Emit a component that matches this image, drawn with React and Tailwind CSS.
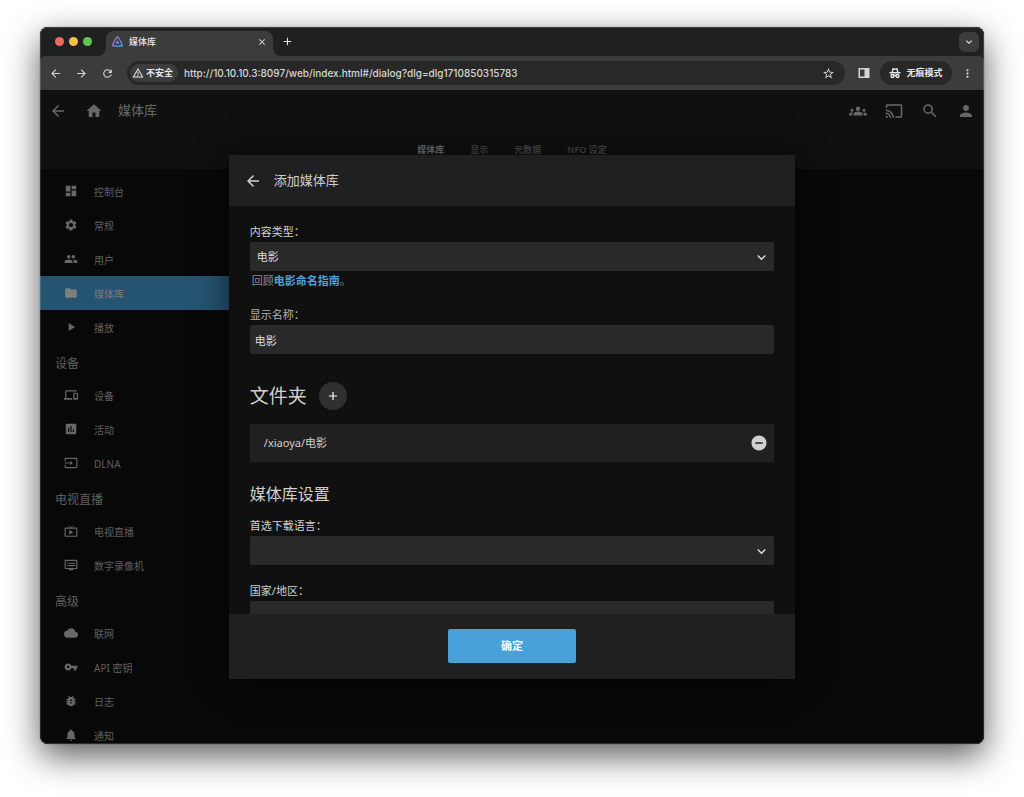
import React from 'react'
import {
  MdAdd,
  MdArrowBack,
  MdArrowForward,
  MdAssessment,
  MdBugReport,
  MdCast,
  MdClose,
  MdCloud,
  MdDashboard,
  MdDevices,
  MdDvr,
  MdFolder,
  MdGroups,
  MdHome,
  MdInput,
  MdKeyboardArrowDown,
  MdLiveTv,
  MdMoreVert,
  MdNotifications,
  MdPeople,
  MdPerson,
  MdPlayArrow,
  MdRefresh,
  MdRemoveCircle,
  MdSearch,
  MdSettings,
  MdStarBorder,
  MdVpnKey,
  MdWarningAmber,
} from 'react-icons/md'

const menu = [
  {
    items: [
      { label: '控制台', icon: MdDashboard },
      { label: '常规', icon: MdSettings },
      { label: '用户', icon: MdPeople },
      { label: '媒体库', icon: MdFolder, active: true },
      { label: '播放', icon: MdPlayArrow },
    ],
  },
  {
    title: '设备',
    items: [
      { label: '设备', icon: MdDevices },
      { label: '活动', icon: MdAssessment },
      { label: 'DLNA', icon: MdInput },
    ],
  },
  {
    title: '电视直播',
    items: [
      { label: '电视直播', icon: MdLiveTv },
      { label: '数字录像机', icon: MdDvr },
    ],
  },
  {
    title: '高级',
    items: [
      { label: '联网', icon: MdCloud },
      { label: 'API 密钥', icon: MdVpnKey },
      { label: '日志', icon: MdBugReport },
      { label: '通知', icon: MdNotifications },
    ],
  },
]

const actions = [
  { label: '同步播放', icon: MdGroups },
  { label: '投屏', icon: MdCast },
  { label: '搜索', icon: MdSearch },
  { label: '用户', icon: MdPerson },
]

function JellyfinLogo() {
  return (
    <svg viewBox="0 0 24 24" className="size-[11px] shrink-0">
      <defs>
        <linearGradient id="jf" x1="0.1" y1="0.4" x2="0.9" y2="0.9">
          <stop offset="0" stopColor="#a55fc4" />
          <stop offset="1" stopColor="#2ba0dc" />
        </linearGradient>
      </defs>
      <path
        fill="url(#jf)"
        d="M12 0C8.826 0-1.398 18.537.16 21.666c1.56 3.129 22.14 3.094 23.682 0C25.384 18.573 15.177 0 12 0zm7.76 18.949c-1.008 2.028-14.493 2.05-15.514 0C3.224 16.9 9.92 4.755 12.003 4.755c2.081 0 8.77 12.166 7.759 14.196zM12 9.198c-1.054 0-4.446 6.15-3.93 7.189.518 1.04 7.348 1.027 7.86 0 .511-1.027-2.874-7.19-3.93-7.19z"
      />
    </svg>
  )
}

function IncognitoIcon() {
  return (
    <svg
      viewBox="0 0 24 24"
      className="size-3 shrink-0"
      fill="none"
      stroke="currentColor"
      strokeWidth="2.8"
    >
      <path d="M6.500 10l1.500-6.500c2.500 1 5.500 1 8 0L17.500 10M1 11.500h22" strokeLinejoin="round" />
      <circle cx="7" cy="18" r="3" />
      <circle cx="17" cy="18" r="3" />
      <path d="M9.500 17.500c1.500-1.200 3.500-1.200 5 0" />
    </svg>
  )
}

function SidePanelIcon() {
  return (
    <svg viewBox="0 0 12 12" className="size-3">
      <path fill="currentColor" fillRule="evenodd" d="M.5 1h11v10H.5zM2 2.500v7h4.500v-7z" />
    </svg>
  )
}

// inverted corner where the tab meets the toolbar
function TabFoot({ flip }) {
  return (
    <svg viewBox="0 0 8 8" className={flip ? 'size-2 -scale-x-100' : 'size-2'}>
      <path fill="#3c3c3c" d="M8 0v8H0a8 8 0 0 0 8-8z" />
    </svg>
  )
}

function TabStrip() {
  return (
    <div className="flex h-[29px] items-end bg-[#1f2121] pl-[15px] pr-[5px] text-[#e6e6e6]">
      <div className="flex h-full items-center gap-[5px]">
        <span className="size-[9px] rounded-full bg-[#ec6a5e]" />
        <span className="size-[9px] rounded-full bg-[#f4bf4f]" />
        <span className="size-[9px] rounded-full bg-[#61c554]" />
      </div>
      <div className="ml-[6px] flex items-end">
        <TabFoot />
        <div className="flex h-[25px] w-[167px] items-center rounded-t-lg bg-[#3c3c3c] pl-[6px] pr-[6px] pb-1">
          <JellyfinLogo />
          <span className="ml-[6px] flex-1 text-[9px] font-medium">媒体库</span>
          <button type="button" aria-label="关闭标签页">
            <MdClose size={10} />
          </button>
        </div>
        <TabFoot flip />
      </div>
      <button type="button" aria-label="新标签页" className="flex h-full items-center">
        <MdAdd size={13} />
      </button>
      <button
        type="button"
        aria-label="搜索标签页"
        className="mb-1 ml-auto flex size-5 items-center justify-center rounded-md bg-[#3c3c3c]"
      >
        <MdKeyboardArrowDown size={12} />
      </button>
    </div>
  )
}

function Toolbar() {
  return (
    <div className="bg-[#1f2121]">
      <div className="flex h-[34px] items-center rounded-t-md bg-[#3c3c3c] text-[#d6d6d6]">
        <div className="flex shrink-0 items-center gap-[13px] pl-[9px]">
          <button type="button" aria-label="后退">
            <MdArrowBack size={13} />
          </button>
          <button type="button" aria-label="前进">
            <MdArrowForward size={13} />
          </button>
          <button type="button" aria-label="重新加载">
            <MdRefresh size={13} />
          </button>
        </div>
        <div className="ml-[13px] flex h-6 min-w-0 flex-1 items-center rounded-full bg-[#282828] pl-[3px] pr-[10px]">
          <span className="flex h-[18px] shrink-0 items-center gap-[2px] rounded-full bg-[#3c3c3c] pl-[2px] pr-[5px] text-[9px] font-semibold text-[#e6e6e6]">
            <MdWarningAmber size={12} />
            不安全
          </span>
          <input
            type="text"
            aria-label="地址"
            defaultValue="http://10.10.10.3:8097/web/index.html#/dialog?dlg=dlg1710850315783"
            className="ml-[6px] min-w-0 flex-1 bg-transparent text-[10px] font-medium outline-none"
          />
          <button type="button" aria-label="收藏">
            <MdStarBorder size={13} />
          </button>
        </div>
        <button type="button" aria-label="侧边栏" className="ml-[13px]">
          <SidePanelIcon />
        </button>
        <button
          type="button"
          className="ml-[10px] flex h-6 w-[72px] shrink-0 items-center justify-center gap-[5px] rounded-full bg-[#282828] text-[9px] font-semibold text-[#e6e6e6]"
        >
          <IncognitoIcon />
          无痕模式
        </button>
        <button type="button" aria-label="菜单" className="ml-[9px] mr-[10px]">
          <MdMoreVert size={13} />
        </button>
      </div>
    </div>
  )
}

function Header() {
  return (
    <header className="h-[79px] bg-[#202020] text-[#cfcfcf]">
      <div className="flex h-[41px] items-center pl-[9px]">
        <a href="#back" aria-label="返回" className="flex w-9">
          <MdArrowBack size={18} />
        </a>
        <a href="#home" aria-label="主页">
          <MdHome size={18} />
        </a>
        <h1 className="ml-[15px] text-[13px]">媒体库</h1>
        <div className="ml-auto flex">
          {actions.map(({ label, icon: Icon }) => (
            <button key={label} type="button" aria-label={label} className="flex w-9 justify-center">
              <Icon size={18} />
            </button>
          ))}
        </div>
      </div>
      <nav className="flex h-[38px] items-center justify-center gap-[26px] text-[9px] font-semibold text-[#929292]">
        <a href="#library" className="text-[#e0e0e0]">
          媒体库
        </a>
        <a href="#display">显示</a>
        <a href="#metadata">元数据</a>
        <a href="#nfo">NFO 设定</a>
      </nav>
    </header>
  )
}

function Sidebar() {
  return (
    <aside className="w-1/5 min-h-0 flex-1 overflow-hidden pt-[5px]">
      {menu.map((group, i) => (
        <div key={i}>
          {group.title && (
            <h2 className="flex h-[34px] items-center pl-[15px] pt-[6px] text-[12px] text-[#bcbcbc]">
              {group.title}
            </h2>
          )}
          {group.items.map(({ label, icon: Icon, active }) => (
            <a
              key={label}
              href={'#' + label}
              className={
                active
                  ? 'flex h-[34px] items-center gap-4 bg-[#48a8e0] pt-[2px] pl-6 text-[10px] text-[#f0f0f0]'
                  : 'flex h-[34px] items-center gap-4 pt-[2px] pl-6 text-[10px] text-[#bcbcbc]'
              }
            >
              <Icon
                size={14}
                className={active ? 'mb-[2px] text-white' : 'mb-[2px] text-[#cfcfcf]'}
              />
              {label}
            </a>
          ))}
        </div>
      ))}
    </aside>
  )
}

function SelectField({ id, label, value, children }) {
  return (
    <div className="mb-[18px]">
      <label htmlFor={id} className="mb-[2px] block h-4 text-[11px] leading-4">
        {label}
      </label>
      <div className="relative">
        <select
          id={id}
          defaultValue={value}
          className="block h-[29px] w-full appearance-none rounded-xs bg-[#292929] px-[7px] text-[11px] text-[#dedede]"
        >
          <option value={value}>{value}</option>
        </select>
        <MdKeyboardArrowDown
          size={17}
          className="pointer-events-none absolute top-[7px] right-1 text-[#dedede]"
        />
      </div>
      {children}
    </div>
  )
}

function LibraryDialog() {
  return (
    <form
      role="dialog"
      aria-labelledby="dialog-title"
      className="flex h-4/5 w-3/5 flex-col bg-[#101010] text-[#d0d0d0] shadow-[0_0_30px_rgba(0,0,0,0.6)]"
    >
      <div className="flex h-[51px] shrink-0 items-center gap-3 bg-[#202020] pl-[15px]">
        <button type="button" aria-label="返回">
          <MdArrowBack size={18} />
        </button>
        <h3 id="dialog-title" className="text-[13px]">
          添加媒体库
        </h3>
      </div>
      <div className="min-h-0 flex-1 overflow-hidden px-[21px] pt-[18px]">
        <SelectField id="type" label="内容类型：" value="电影">
          <p className="mt-[2px] h-4 pl-[2px] text-[11px] leading-4 text-[#8c8c8c]">
            回顾
            <a href="#movies" className="font-semibold text-[#4aa3dc]">
              电影命名指南
            </a>
            。
          </p>
        </SelectField>
        <div className="mb-7">
          <label htmlFor="name" className="mb-[2px] block h-4 text-[11px] leading-4 text-[#b4b4b4]">
            显示名称：
          </label>
          <input
            id="name"
            type="text"
            defaultValue="电影"
            className="block h-[29px] w-full rounded-xs bg-[#292929] px-[5px] text-[11px] text-[#dedede]"
          />
        </div>
        <div className="mb-[14px] flex items-center gap-3">
          <h2 className="text-[19px] leading-7">文件夹</h2>
          <button
            type="button"
            aria-label="添加"
            className="flex size-7 items-center justify-center rounded-full bg-[#303030] text-white"
          >
            <MdAdd size={14} />
          </button>
        </div>
        <div className="mb-5 flex h-[38px] items-center justify-between bg-[#202020] pr-[6px] pl-[14px]">
          <span className="text-[11px]">/xiaoya/电影</span>
          <button type="button" aria-label="移除">
            <MdRemoveCircle size={18} />
          </button>
        </div>
        <h2 className="mb-3 text-[16px] leading-6">媒体库设置</h2>
        <SelectField id="language" label="首选下载语言：" value="" />
        <SelectField id="country" label="国家/地区：" value="" />
      </div>
      <div className="flex h-[65px] shrink-0 items-center justify-center bg-[#202020]">
        <button
          type="submit"
          className="h-[34px] w-32 rounded-xs bg-[#48a1d9] text-[11px] font-semibold text-white"
        >
          确定
        </button>
      </div>
    </form>
  )
}

function App() {
  return (
    <div className="h-screen bg-white px-10 pt-[27px] pb-[53px] font-['Inter','Noto_Sans_CJK_SC',sans-serif]">
      <div className="relative flex h-full flex-col overflow-hidden rounded-lg bg-[#101010] shadow-[0_0_1px_rgba(0,0,0,0.8),0_12px_34px_rgba(0,0,0,0.65)] after:pointer-events-none after:absolute after:inset-0 after:rounded-lg after:ring-1 after:ring-white/15 after:ring-inset">
        <TabStrip />
        <Toolbar />
        <main className="relative flex min-h-0 flex-1 flex-col font-['Noto_Sans','Noto_Sans_CJK_SC',sans-serif]">
          <Header />
          <Sidebar />
          <div className="absolute inset-0 flex items-center justify-center bg-black/50">
            <LibraryDialog />
          </div>
        </main>
      </div>
    </div>
  )
}

export default App
